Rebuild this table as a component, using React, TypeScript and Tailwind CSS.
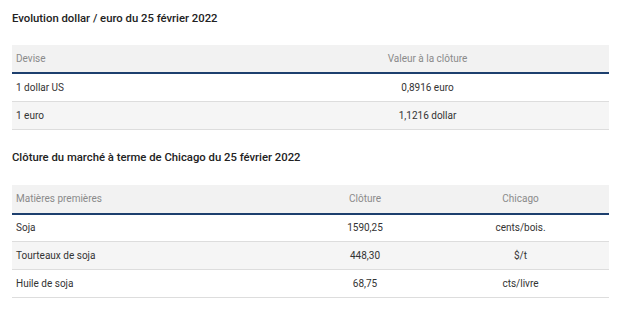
const devises = [
  ['1 dollar US', '0,8916 euro'],
  ['1 euro', '1,1216 dollar'],
];

const chicago = [
  ['Soja', '1590,25', 'cents/bois.'],
  ['Tourteaux de soja', '448,30', '$/t'],
  ['Huile de soja', '68,75', 'cts/livre'],
];

export default function App() {
  return (
    <div className="w-[625px] h-[309px] bg-white px-3 pt-[10px] font-['Roboto',sans-serif] text-[10px] text-[#333]">
      <h2 className="text-[11.3px] font-medium text-[#222] leading-[17px]">
        Evolution dollar / euro du 25 février 2022
      </h2>
      <table className="mt-[18px] w-[597px] border-collapse">
        <thead>
          <tr className="bg-[#f2f2f2] border-b-2 border-[#1d3f6e]">
            <th className="w-[234px] h-[28px] px-[4px] text-left font-normal text-[#8a8a8a]">Devise</th>
            <th className="font-normal text-[#8a8a8a]">Valeur à la clôture</th>
          </tr>
        </thead>
        <tbody>
          {devises.map((r, i) => (
            <tr key={i} className={`border-b border-[#dddddd] ${i % 2 === 1 ? 'bg-[#f5f5f5]' : 'bg-white'}`}>
              <td className="h-[28px] px-[4px]">{r[0]}</td>
              <td className="text-center">{r[1]}</td>
            </tr>
          ))}
        </tbody>
      </table>

      <h2 className="mt-[19px] text-[11.3px] font-medium text-[#222] leading-[17px]">
        Clôture du marché à terme de Chicago du 25 février 2022
      </h2>
      <table className="mt-[19px] w-[597px] border-collapse">
        <thead>
          <tr className="bg-[#f2f2f2] border-b-2 border-[#1d3f6e]">
            <th className="w-[286px] h-[29px] px-[4px] text-left font-normal text-[#8a8a8a]">Matières premières</th>
            <th className="w-[134px] font-normal text-[#8a8a8a]">Clôture</th>
            <th className="font-normal text-[#8a8a8a]">Chicago</th>
          </tr>
        </thead>
        <tbody>
          {chicago.map((r, i) => (
            <tr key={i} className={`border-b border-[#dddddd] ${i % 2 === 1 ? 'bg-[#f5f5f5]' : 'bg-white'}`}>
              <td className="h-[28px] px-[4px]">{r[0]}</td>
              <td className="text-center">{r[1]}</td>
              <td className="text-center">{r[2]}</td>
            </tr>
          ))}
        </tbody>
      </table>
    </div>
  );
}
